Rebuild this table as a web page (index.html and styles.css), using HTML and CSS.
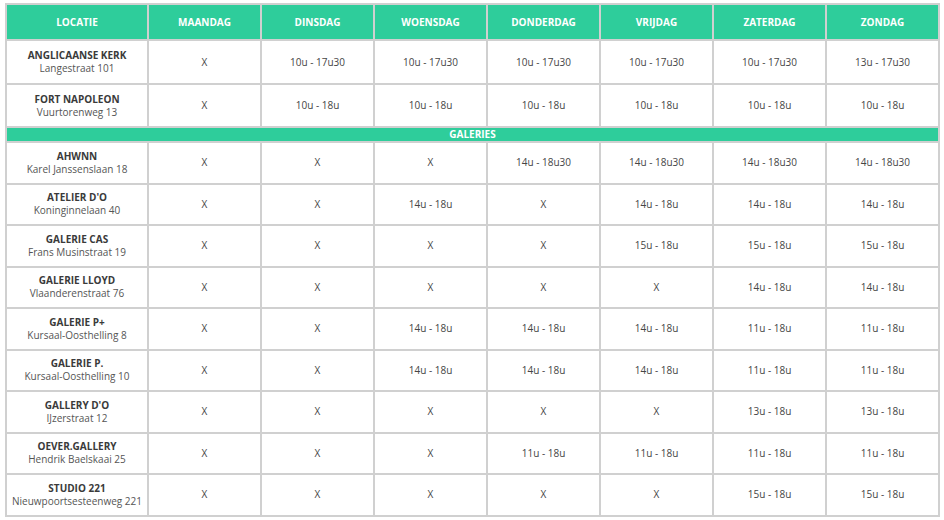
FILE: index.html
```html
<!DOCTYPE html>
<html lang="nl">
<head>
<meta charset="utf-8">
<title>Openingsuren</title>
<link rel="stylesheet" href="styles.css">
</head>
<body>
<table class="hours">
  <colgroup>
    <col class="col-loc">
    <col span="7" class="col-day">
  </colgroup>
  <thead>
    <tr class="head-row">
      <th>LOCATIE</th><th>MAANDAG</th><th>DINSDAG</th><th>WOENSDAG</th><th>DONDERDAG</th><th>VRIJDAG</th><th>ZATERDAG</th><th>ZONDAG</th>
    </tr>
  </thead>
  <tbody>
    <tr class="row-a">
      <td><strong>ANGLICAANSE KERK</strong><span>Langestraat 101</span></td>
      <td>X</td><td>10u - 17u30</td><td>10u - 17u30</td><td>10u - 17u30</td><td>10u - 17u30</td><td>10u - 17u30</td><td>13u - 17u30</td>
    </tr>
    <tr class="row-b">
      <td><strong>FORT NAPOLEON</strong><span>Vuurtorenweg 13</span></td>
      <td>X</td><td>10u - 18u</td><td>10u - 18u</td><td>10u - 18u</td><td>10u - 18u</td><td>10u - 18u</td><td>10u - 18u</td>
    </tr>
    <tr class="group-row">
      <th colspan="8">GALERIES</th>
    </tr>
    <tr class="row">
      <td><strong>AHWNN</strong><span>Karel Janssenslaan 18</span></td>
      <td>X</td><td>X</td><td>X</td><td>14u - 18u30</td><td>14u - 18u30</td><td>14u - 18u30</td><td>14u - 18u30</td>
    </tr>
    <tr class="row">
      <td><strong>ATELIER D'O</strong><span>Koninginnelaan 40</span></td>
      <td>X</td><td>X</td><td>14u - 18u</td><td>X</td><td>14u - 18u</td><td>14u - 18u</td><td>14u - 18u</td>
    </tr>
    <tr class="row">
      <td><strong>GALERIE CAS</strong><span>Frans Musinstraat 19</span></td>
      <td>X</td><td>X</td><td>X</td><td>X</td><td>15u - 18u</td><td>15u - 18u</td><td>15u - 18u</td>
    </tr>
    <tr class="row">
      <td><strong>GALERIE LLOYD</strong><span>Vlaanderenstraat 76</span></td>
      <td>X</td><td>X</td><td>X</td><td>X</td><td>X</td><td>14u - 18u</td><td>14u - 18u</td>
    </tr>
    <tr class="row">
      <td><strong>GALERIE P+</strong><span>Kursaal-Oosthelling 8</span></td>
      <td>X</td><td>X</td><td>14u - 18u</td><td>14u - 18u</td><td>14u - 18u</td><td>11u - 18u</td><td>11u - 18u</td>
    </tr>
    <tr class="row">
      <td><strong>GALERIE P.</strong><span>Kursaal-Oosthelling 10</span></td>
      <td>X</td><td>X</td><td>14u - 18u</td><td>14u - 18u</td><td>14u - 18u</td><td>11u - 18u</td><td>11u - 18u</td>
    </tr>
    <tr class="row">
      <td><strong>GALLERY D'O</strong><span>IJzerstraat 12</span></td>
      <td>X</td><td>X</td><td>X</td><td>X</td><td>X</td><td>13u - 18u</td><td>13u - 18u</td>
    </tr>
    <tr class="row">
      <td><strong>OEVER.GALLERY</strong><span>Hendrik Baelskaai 25</span></td>
      <td>X</td><td>X</td><td>X</td><td>11u - 18u</td><td>11u - 18u</td><td>11u - 18u</td><td>11u - 18u</td>
    </tr>
    <tr class="row">
      <td><strong>STUDIO 221</strong><span>Nieuwpoortsesteenweg 221</span></td>
      <td>X</td><td>X</td><td>X</td><td>X</td><td>X</td><td>15u - 18u</td><td>15u - 18u</td>
    </tr>
  </tbody>
</table>
</body>
</html>
```
FILE: styles.css
```css
html, body {
  margin: 0;
  padding: 0;
  background: #ffffff;
}

body {
  padding: 3px 0 0 5px;
  font-family: "Open Sans", "Liberation Sans", sans-serif;
  font-size: 10px;
  line-height: 13px;
  color: #454545;
}

.hours {
  width: 932px;
  border-collapse: collapse;
  table-layout: fixed;
}

.col-loc { width: 142px; }
.col-day { width: 113px; }

.hours th,
.hours td {
  border: 2px solid #d0d0d0;
  padding: 0 4px;
  text-align: center;
  vertical-align: middle;
}

.head-row th {
  background: #2ecd9b;
  color: #ffffff;
  font-weight: 700;
  height: 34px;
}

.group-row th {
  background: #2ecd9b;
  color: #ffffff;
  font-weight: 700;
  height: 13px;
  line-height: 11px;
  padding: 0;
}

.row-a td { height: 42px; }
.row-b td { height: 41px; }
.row td { height: 39.5px; }

.hours td strong {
  display: block;
  font-weight: 700;
  color: #3a3a3a;
}

.hours td span {
  display: block;
  color: #555555;
}
```
